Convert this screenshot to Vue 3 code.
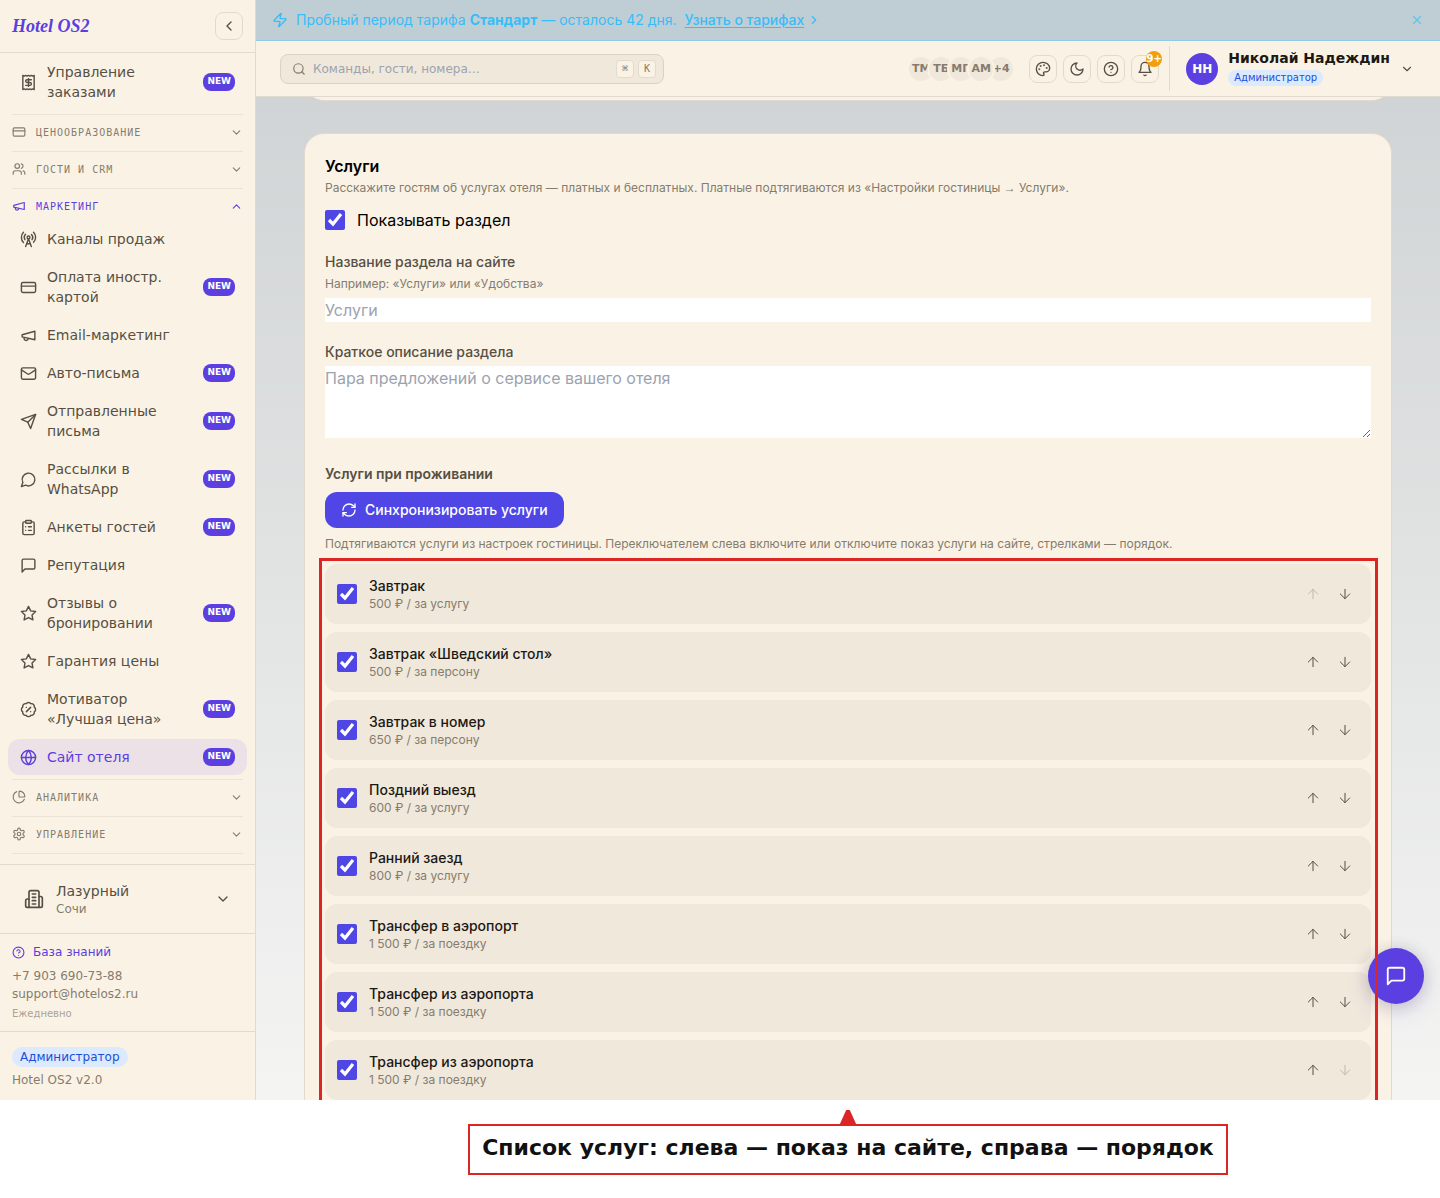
<script setup>
import { h, ref } from 'vue'

const paths = {
  receipt: '<path d="M4 2v20l2-1 2 1 2-1 2 1 2-1 2 1 2-1 2 1V2l-2 1-2-1-2 1-2-1-2 1-2-1-2 1Z"/><path d="M16 8h-6a2 2 0 1 0 0 4h4a2 2 0 1 1 0 4H8"/><path d="M12 17.5v-11"/>',
  card: '<rect width="20" height="14" x="2" y="5" rx="2"/><path d="M2 10h20"/>',
  users: '<path d="M16 21v-2a4 4 0 0 0-4-4H6a4 4 0 0 0-4 4v2"/><circle cx="9" cy="7" r="4"/><path d="M22 21v-2a4 4 0 0 0-3-3.87"/><path d="M16 3.13a4 4 0 0 1 0 7.75"/>',
  megaphone: '<path d="m3 11 18-5v12L3 14v-3z"/><path d="M11.6 16.8a3 3 0 1 1-5.8-1.6"/>',
  tower: '<path d="M4.9 16.1C1 12.2 1 5.8 4.9 1.9"/><path d="M7.8 4.7a6.14 6.14 0 0 0-.8 7.5"/><circle cx="12" cy="9" r="2"/><path d="M16.2 4.8c2 2 2.26 5.11.8 7.47"/><path d="M19.1 1.9a9.96 9.96 0 0 1 0 14.1"/><path d="M9.5 18h5"/><path d="m8 22 4-11 4 11"/>',
  mail: '<rect width="20" height="16" x="2" y="4" rx="2"/><path d="m22 7-8.97 5.7a1.94 1.94 0 0 1-2.06 0L2 7"/>',
  send: '<path d="m22 2-7 20-4-9-9-4Z"/><path d="M22 2 11 13"/>',
  chat: '<path d="M7.9 20A9 9 0 1 0 4 16.1L2 22Z"/>',
  clipboard: '<rect width="8" height="4" x="8" y="2" rx="1"/><path d="M16 4h2a2 2 0 0 1 2 2v14a2 2 0 0 1-2 2H6a2 2 0 0 1-2-2V6a2 2 0 0 1 2-2h2"/><path d="M12 11h4"/><path d="M12 16h4"/><path d="M8 11h.01"/><path d="M8 16h.01"/>',
  message: '<path d="M21 15a2 2 0 0 1-2 2H7l-4 4V5a2 2 0 0 1 2-2h14a2 2 0 0 1 2 2z"/>',
  star: '<path d="m12 2 3.09 6.26L22 9.27l-5 4.87 1.18 6.88L12 17.77l-6.18 3.25L7 14.14 2 9.27l6.91-1.01L12 2z"/>',
  percent: '<path d="M3.85 8.62a4 4 0 0 1 4.78-4.77 4 4 0 0 1 6.74 0 4 4 0 0 1 4.78 4.78 4 4 0 0 1 0 6.74 4 4 0 0 1-4.77 4.78 4 4 0 0 1-6.75 0 4 4 0 0 1-4.78-4.77 4 4 0 0 1 0-6.76Z"/><path d="m15 9-6 6"/><path d="M9 9h.01"/><path d="M15 15h.01"/>',
  globe: '<circle cx="12" cy="12" r="10"/><path d="M12 2a14.5 14.5 0 0 0 0 20 14.5 14.5 0 0 0 0-20"/><path d="M2 12h20"/>',
  pie: '<path d="M21 12c.552 0 1.005-.449.95-.998a10 10 0 0 0-8.953-8.951c-.55-.055-.998.398-.998.95v8a1 1 0 0 0 1 1z"/><path d="M21.21 15.89A10 10 0 1 1 8 2.83"/>',
  gear: '<path d="M12.22 2h-.44a2 2 0 0 0-2 2v.18a2 2 0 0 1-1 1.73l-.43.25a2 2 0 0 1-2 0l-.15-.08a2 2 0 0 0-2.73.73l-.22.38a2 2 0 0 0 .73 2.73l.15.1a2 2 0 0 1 1 1.72v.51a2 2 0 0 1-1 1.74l-.15.09a2 2 0 0 0-.73 2.73l.22.38a2 2 0 0 0 2.73.73l.15-.08a2 2 0 0 1 2 0l.43.25a2 2 0 0 1 1 1.73V20a2 2 0 0 0 2 2h.44a2 2 0 0 0 2-2v-.18a2 2 0 0 1 1-1.73l.43-.25a2 2 0 0 1 2 0l.15.08a2 2 0 0 0 2.73-.73l.22-.39a2 2 0 0 0-.73-2.73l-.15-.08a2 2 0 0 1-1-1.74v-.5a2 2 0 0 1 1-1.74l.15-.09a2 2 0 0 0 .73-2.73l-.22-.38a2 2 0 0 0-2.73-.73l-.15.08a2 2 0 0 1-2 0l-.43-.25a2 2 0 0 1-1-1.73V4a2 2 0 0 0-2-2z"/><circle cx="12" cy="12" r="3"/>',
  building: '<path d="M6 22V4a2 2 0 0 1 2-2h8a2 2 0 0 1 2 2v18Z"/><path d="M6 12H4a2 2 0 0 0-2 2v6a2 2 0 0 0 2 2h2"/><path d="M18 9h2a2 2 0 0 1 2 2v9a2 2 0 0 1-2 2h-2"/><path d="M10 6h4"/><path d="M10 10h4"/><path d="M10 14h4"/><path d="M10 18h4"/>',
  help: '<circle cx="12" cy="12" r="10"/><path d="M9.09 9a3 3 0 0 1 5.83 1c0 2-3 3-3 3"/><path d="M12 17h.01"/>',
  palette: '<circle cx="13.5" cy="6.5" r=".5" fill="currentColor"/><circle cx="17.5" cy="10.5" r=".5" fill="currentColor"/><circle cx="8.5" cy="7.5" r=".5" fill="currentColor"/><circle cx="6.5" cy="12.5" r=".5" fill="currentColor"/><path d="M12 2C6.5 2 2 6.5 2 12s4.5 10 10 10c.926 0 1.648-.746 1.648-1.688 0-.437-.18-.835-.437-1.125-.29-.289-.438-.652-.438-1.125a1.64 1.64 0 0 1 1.668-1.668h1.996c3.051 0 5.555-2.503 5.555-5.554C21.965 6.012 17.461 2 12 2z"/>',
  moon: '<path d="M12 3a6 6 0 0 0 9 9 9 9 0 1 1-9-9Z"/>',
  bell: '<path d="M6 8a6 6 0 0 1 12 0c0 7 3 9 3 9H3s3-2 3-9"/><path d="M10.3 21a1.94 1.94 0 0 0 3.4 0"/>',
  search: '<circle cx="11" cy="11" r="8"/><path d="m21 21-4.3-4.3"/>',
  zap: '<path d="M4 14a1 1 0 0 1-.78-1.63l9.9-10.2a.5.5 0 0 1 .86.46l-1.92 6.02A1 1 0 0 0 13 10h7a1 1 0 0 1 .78 1.63l-9.9 10.2a.5.5 0 0 1-.86-.46l1.92-6.02A1 1 0 0 0 11 14z"/>',
  close: '<path d="M18 6 6 18"/><path d="m6 6 12 12"/>',
  down: '<path d="m6 9 6 6 6-6"/>',
  up: '<path d="m18 15-6-6-6 6"/>',
  left: '<path d="m15 18-6-6 6-6"/>',
  right: '<path d="m9 18 6-6-6-6"/>',
  refresh: '<path d="M3 12a9 9 0 0 1 9-9 9.75 9.75 0 0 1 6.74 2.74L21 8"/><path d="M21 3v5h-5"/><path d="M21 12a9 9 0 0 1-9 9 9.75 9.75 0 0 1-6.74-2.74L3 16"/><path d="M8 16H3v5"/>',
  arrowUp: '<path d="m5 12 7-7 7 7"/><path d="M12 19V5"/>',
  arrowDown: '<path d="M12 5v14"/><path d="m19 12-7 7-7-7"/>'
}

const Icon = (props) =>
  h('svg', {
    width: props.size,
    height: props.size,
    viewBox: '0 0 24 24',
    fill: 'none',
    stroke: 'currentColor',
    'stroke-width': props.stroke || 2,
    'stroke-linecap': 'round',
    'stroke-linejoin': 'round',
    'aria-hidden': 'true',
    innerHTML: paths[props.name]
  })
Icon.props = ['name', 'size', 'stroke']

const groups = [
  { items: [{ icon: 'receipt', label: 'Управление заказами', isNew: true }] },
  { title: 'Ценообразование', icon: 'card' },
  { title: 'Гости и CRM', icon: 'users' },
  {
    title: 'Маркетинг',
    icon: 'megaphone',
    open: true,
    items: [
      { icon: 'tower', label: 'Каналы продаж' },
      { icon: 'card', label: 'Оплата иностр. картой', isNew: true },
      { icon: 'megaphone', label: 'Email-маркетинг' },
      { icon: 'mail', label: 'Авто-письма', isNew: true },
      { icon: 'send', label: 'Отправленные письма', isNew: true },
      { icon: 'chat', label: 'Рассылки в WhatsApp', isNew: true },
      { icon: 'clipboard', label: 'Анкеты гостей', isNew: true },
      { icon: 'message', label: 'Репутация' },
      { icon: 'star', label: 'Отзывы о бронировании', isNew: true },
      { icon: 'star', label: 'Гарантия цены' },
      { icon: 'percent', label: 'Мотиватор «Лучшая цена»', isNew: true },
      { icon: 'globe', label: 'Сайт отеля', isNew: true, active: true }
    ]
  },
  { title: 'Аналитика', icon: 'pie' },
  { title: 'Управление', icon: 'gear' }
]

const team = ['ТМ', 'ТБ', 'МП', 'АМ']

const showSection = ref(true)
const sectionName = ref('')
const sectionText = ref('')

const services = ref([
  { name: 'Завтрак', price: '500 ₽ / за услугу', on: true },
  { name: 'Завтрак «Шведский стол»', price: '500 ₽ / за персону', on: true },
  { name: 'Завтрак в номер', price: '650 ₽ / за персону', on: true },
  { name: 'Поздний выезд', price: '600 ₽ / за услугу', on: true },
  { name: 'Ранний заезд', price: '800 ₽ / за услугу', on: true },
  { name: 'Трансфер в аэропорт', price: '1 500 ₽ / за поездку', on: true },
  { name: 'Трансфер из аэропорта', price: '1 500 ₽ / за поездку', on: true },
  { name: 'Трансфер из аэропорта', price: '1 500 ₽ / за поездку', on: true }
])

function move(index, step) {
  const list = services.value
  const [item] = list.splice(index, 1)
  list.splice(index + step, 0, item)
}
</script>

<template>
  <div class="page">
    <div class="app">
      <aside class="sidebar">
        <div class="brand">
          <a href="#" class="logo">Hotel OS2</a>
          <button class="collapse" type="button" aria-label="Свернуть меню"><Icon name="left" size="16" /></button>
        </div>

        <nav class="nav">
          <div v-for="(group, g) in groups" :key="g" class="group">
            <button v-if="group.title" type="button" class="group-head" :class="{ open: group.open }">
              <Icon :name="group.icon" size="14" />
              <span>{{ group.title }}</span>
              <Icon :name="group.open ? 'up' : 'down'" size="13" />
            </button>
            <div v-if="group.items" class="items">
              <a v-for="item in group.items" :key="item.label" href="#" class="item" :class="{ active: item.active }">
                <Icon :name="item.icon" size="17" />
                <span class="item-label">{{ item.label }}</span>
                <span v-if="item.isNew" class="new">NEW</span>
              </a>
            </div>
          </div>
        </nav>

        <div class="hotel">
          <button type="button" class="hotel-button">
            <Icon name="building" size="20" />
            <span class="hotel-text">
              <span class="hotel-name">Лазурный</span>
              <span class="hotel-city">Сочи</span>
            </span>
            <Icon name="down" size="16" />
          </button>
        </div>

        <div class="support">
          <a href="#" class="knowledge"><Icon name="help" size="13" />База знаний</a>
          <a href="tel:+79036907388">+7 903 690-73-88</a>
          <a href="mailto:support@hotelos2.ru">support@hotelos2.ru</a>
          <small>Ежедневно</small>
        </div>

        <div class="version">
          <span class="role">Администратор</span>
          <span>Hotel OS2 v2.0</span>
        </div>
      </aside>

      <div class="content">
        <div class="banner">
          <Icon name="zap" size="16" />
          <span>Пробный период тарифа <strong>Стандарт</strong> — осталось 42 дня.</span>
          <a href="#">Узнать о тарифах</a>
          <Icon name="right" size="14" />
          <button type="button" aria-label="Закрыть"><Icon name="close" size="14" /></button>
        </div>

        <header class="topbar">
          <div class="search">
            <Icon name="search" size="14" />
            <input type="search" placeholder="Команды, гости, номера…" aria-label="Поиск" />
            <kbd>⌘</kbd>
            <kbd>K</kbd>
          </div>

          <div class="team">
            <span v-for="person in team" :key="person" class="mate">{{ person }}</span>
            <span class="mate more">+4</span>
          </div>

          <div class="tools">
            <button type="button" aria-label="Тема"><Icon name="palette" size="16" /></button>
            <button type="button" aria-label="Тёмный режим"><Icon name="moon" size="16" /></button>
            <button type="button" aria-label="Справка"><Icon name="help" size="16" /></button>
            <button type="button" aria-label="Уведомления" class="bell">
              <Icon name="bell" size="16" />
              <span class="count">9+</span>
            </button>
          </div>

          <button type="button" class="user">
            <span class="avatar">НН</span>
            <span class="user-text">
              <span class="user-name">Николай Надеждин</span>
              <span class="role small">Администратор</span>
            </span>
            <Icon name="down" size="14" />
          </button>
        </header>

        <main class="main">
          <section class="card previous"></section>

          <section class="card">
            <h2>Услуги</h2>
            <p class="hint intro">Расскажите гостям об услугах отеля — платных и бесплатных. Платные подтягиваются из «Настройки гостиницы <span class="arrow">→</span> Услуги».</p>

            <label class="toggle">
              <input v-model="showSection" type="checkbox" />
              Показывать раздел
            </label>

            <div class="field">
              <label for="section-name">Название раздела на сайте</label>
              <p class="hint">Например: «Услуги» или «Удобства»</p>
              <input id="section-name" v-model="sectionName" type="text" placeholder="Услуги" />
            </div>

            <div class="field">
              <label for="section-text">Краткое описание раздела</label>
              <textarea id="section-text" v-model="sectionText" rows="3" placeholder="Пара предложений о сервисе вашего отеля"></textarea>
            </div>

            <div class="stay">
              <h3>Услуги при проживании</h3>
              <button type="button" class="sync"><Icon name="refresh" size="16" />Синхронизировать услуги</button>
              <p class="hint">Подтягиваются услуги из настроек гостиницы. Переключателем слева включите или отключите показ услуги на сайте, стрелками — порядок.</p>
            </div>

            <ul class="services">
              <li v-for="(service, i) in services" :key="i">
                <input :id="'service-' + i" v-model="service.on" type="checkbox" />
                <label :for="'service-' + i">
                  <span class="service-name">{{ service.name }}</span>
                  <span class="service-price">{{ service.price }}</span>
                </label>
                <button type="button" aria-label="Выше" :disabled="i === 0" @click="move(i, -1)"><Icon name="arrowUp" size="16" stroke="1.5" /></button>
                <button type="button" aria-label="Ниже" :disabled="i === services.length - 1" @click="move(i, 1)"><Icon name="arrowDown" size="16" stroke="1.5" /></button>
              </li>
            </ul>
          </section>
        </main>
      </div>

      <button type="button" class="fab" aria-label="Чат"><Icon name="message" size="22" /></button>
    </div>

    <footer class="caption">
      <p>Список услуг: слева — показ на сайте, справа — порядок</p>
    </footer>
  </div>
</template>

<style>
body {
  margin: 0;
  background: #fff;
}
</style>

<style scoped>
.page,
.page * {
  box-sizing: border-box;
}

.page {
  --cream: #faf3e5;
  --sand: #f0e8db;
  --line: #e2dace;
  --text: #574f43;
  --muted: #857c6e;
  --violet: #5b3fe0;
  display: flex;
  flex-direction: column;
  height: 100vh;
  font-family: "DejaVu Sans", sans-serif;
  color: var(--text);
}

button {
  padding: 0;
  border: 0;
  background: none;
  font: inherit;
  color: inherit;
  cursor: pointer;
}

a {
  color: inherit;
  text-decoration: none;
}

p,
h2,
h3,
ul {
  margin: 0;
  padding: 0;
}

svg {
  display: block;
  flex: none;
}

.app {
  position: relative;
  display: flex;
  flex: 1;
  min-height: 0;
  overflow: hidden;
  background: linear-gradient(180deg, #cdd1d3 0%, #dfe1e1 46%, #f4f4f3 100%);
}

/* Sidebar */
.sidebar {
  display: flex;
  flex: none;
  flex-direction: column;
  width: 256px;
  border-right: 1px solid var(--line);
  background: var(--cream);
}

.brand {
  display: flex;
  align-items: center;
  justify-content: space-between;
  padding: 12px;
  border-bottom: 1px solid var(--line);
}

.logo {
  font: italic bold 18px "Liberation Serif", serif;
  color: var(--violet);
}

.collapse {
  display: grid;
  place-items: center;
  width: 28px;
  height: 28px;
  border: 1px solid var(--line);
  border-radius: 8px;
}

.nav {
  flex: 1;
  min-height: 0;
  padding: 0 12px;
  overflow-y: auto;
  scrollbar-width: none;
}

.group {
  padding: 4px 0;
  border-bottom: 1px solid #ebe3d6;
}

.group:first-child {
  padding-top: 1px;
}

.group-head {
  display: flex;
  align-items: center;
  gap: 10px;
  width: 100%;
  height: 28px;
  padding-bottom: 2px;
  font: 10px "DejaVu Sans Mono", monospace;
  letter-spacing: 1px;
  text-align: left;
  text-transform: uppercase;
  color: var(--muted);
}

.group-head span {
  flex: 1;
}

.group-head.open {
  color: var(--violet);
}

.items {
  display: flex;
  flex-direction: column;
  gap: 2px;
  margin: 0 -4px;
}

.item {
  display: flex;
  align-items: center;
  gap: 10px;
  padding: 8px 12px;
  border-radius: 12px;
  font-size: 14px;
  line-height: 20px;
}

.item-label {
  flex: 1;
}

.item.active {
  background: #ebe1e6;
  color: var(--violet);
}

.new {
  padding: 0 4px 2px;
  border-radius: 8px;
  background: var(--violet);
  font-size: 9px;
  font-weight: bold;
  line-height: 16px;
  color: #fff;
}

.hotel {
  padding: 8px;
  border-top: 1px solid var(--line);
}

.hotel-button {
  display: flex;
  align-items: center;
  gap: 12px;
  width: 100%;
  padding: 8px 16px;
  text-align: left;
}

.hotel-text {
  display: flex;
  flex: 1;
  flex-direction: column;
}

.hotel-name {
  font-size: 14px;
  line-height: 20px;
}

.hotel-city {
  font-size: 12px;
  line-height: 16px;
  color: var(--muted);
}

.support {
  display: flex;
  flex-direction: column;
  padding: 8px 12px;
  border-top: 1px solid var(--line);
  font-size: 12px;
  line-height: 18px;
  color: var(--muted);
}

.knowledge {
  display: flex;
  align-items: center;
  gap: 8px;
  height: 20px;
  margin-bottom: 5px;
  color: var(--violet);
}

.support small {
  margin-top: 2px;
  font-size: 10px;
  color: #aba294;
}

.version {
  display: flex;
  flex-direction: column;
  align-items: flex-start;
  gap: 4px;
  padding: 15px 12px 11px;
  border-top: 1px solid var(--line);
  font-size: 12px;
  line-height: 18px;
  color: var(--muted);
}

.role {
  padding: 0 8px;
  border-radius: 10px;
  background: #dbeafe;
  font-size: 12px;
  line-height: 20px;
  color: #1d4ed8;
}

.role.small {
  padding: 0 6px;
  font-size: 10px;
  line-height: 16px;
}

/* Content column */
.content {
  display: flex;
  flex: 1;
  flex-direction: column;
  min-width: 0;
}

.banner {
  display: flex;
  align-items: center;
  height: 41px;
  padding: 0 16px;
  border-bottom: 1px solid #8fcbe4;
  background: #bfced5;
  font-family: Inter, sans-serif;
  font-size: 14px;
  line-height: 20px;
  color: #38bdf8;
}

.banner span {
  margin-left: 8px;
}

.banner a {
  margin: 0 3px 0 8px;
  font-weight: 500;
  text-decoration: underline;
  text-underline-offset: 2px;
}

.banner button {
  margin-left: auto;
  opacity: 0.7;
}

.topbar {
  display: flex;
  align-items: center;
  height: 56px;
  padding: 0 24px;
  border-bottom: 1px solid var(--line);
  background: var(--cream);
}

.search {
  display: flex;
  align-items: center;
  gap: 4px;
  width: 384px;
  height: 30px;
  padding: 0 7px 0 11px;
  border: 1px solid #dbd2c5;
  border-radius: 8px;
  background: var(--sand);
  color: var(--muted);
}

.search input {
  flex: 1;
  min-width: 0;
  padding: 0 3px;
  border: 0;
  outline: 0;
  background: none;
  font: 12px "DejaVu Sans", sans-serif;
}

.search kbd {
  width: 18px;
  height: 18px;
  border: 1px solid var(--line);
  border-radius: 4px;
  background: var(--cream);
  font: 10px/16px "DejaVu Sans Mono", monospace;
  text-align: center;
}

input::placeholder,
textarea::placeholder {
  color: #9ca3af;
  opacity: 1;
}

.team {
  display: flex;
  margin-left: auto;
}

.mate {
  z-index: 1;
  width: 28px;
  height: 28px;
  border: 2px solid var(--cream);
  border-radius: 50%;
  background: var(--sand);
  font-size: 11px;
  font-weight: bold;
  line-height: 24px;
  text-align: center;
  color: var(--muted);
}

.mate + .mate {
  margin-left: -8px;
}

.mate.more {
  z-index: 0;
}

.tools {
  display: flex;
  gap: 6px;
  margin: 0 10px 0 14px;
}

.tools button {
  display: grid;
  place-items: center;
  width: 28px;
  height: 28px;
  border: 1px solid var(--line);
  border-radius: 8px;
}

.bell {
  position: relative;
}

.count {
  position: absolute;
  top: -5px;
  right: -4px;
  width: 16px;
  height: 16px;
  border-radius: 50%;
  background: #f59e0b;
  font-size: 10px;
  font-weight: bold;
  line-height: 16px;
  text-align: center;
  color: #fff;
}

.user {
  display: flex;
  align-items: center;
  gap: 10px;
  height: 45px;
  padding: 0 2px 0 16px;
  border-left: 1px solid var(--line);
  text-align: left;
}

.avatar {
  width: 32px;
  height: 32px;
  border-radius: 50%;
  background: var(--violet);
  font-size: 12px;
  font-weight: bold;
  line-height: 32px;
  text-align: center;
  color: #fff;
}

.user-text {
  display: flex;
  flex-direction: column;
  align-items: flex-start;
  gap: 2px;
  padding-bottom: 3px;
}

.user-name {
  font-size: 14px;
  font-weight: bold;
  line-height: 20px;
  color: #1c1814;
}

.main {
  flex: 1;
  min-height: 0;
  padding: 0 48px 32px;
  overflow-y: auto;
  scrollbar-width: none;
  font-family: Inter, sans-serif;
}

.card {
  padding: 20px;
  border: 1px solid var(--line);
  border-radius: 20px;
  background: var(--cream);
}

.card.previous {
  height: 44px;
  margin: -40px 0 32px;
}

h2 {
  font-size: 16px;
  font-weight: 600;
  line-height: 24px;
  color: #000;
}

.hint {
  font-size: 12px;
  line-height: 16px;
  color: var(--muted);
}

.intro {
  margin-top: 2px;
}

.arrow {
  font-family: "Liberation Sans", sans-serif;
}

input[type="checkbox"] {
  flex: none;
  width: 20px;
  height: 20px;
  margin: 0;
  accent-color: #4f46e5;
}

.toggle {
  display: flex;
  align-items: center;
  gap: 12px;
  margin-top: 12px;
  font-size: 16px;
  line-height: 24px;
  color: #000;
}

.field {
  margin-top: 20px;
}

.field label {
  display: block;
  font-size: 14px;
  font-weight: 500;
  line-height: 20px;
}

.field .hint {
  margin-top: 4px;
}

.field input,
.field textarea {
  display: block;
  width: 100%;
  margin-top: 4px;
  padding: 0;
  border: 0;
  background: #fff;
  font: 16px/24px Inter, sans-serif;
  color: #000;
}

.field input {
  height: 24px;
  margin-top: 6px;
}

.stay {
  display: flex;
  flex-direction: column;
  align-items: flex-start;
  gap: 8px;
  margin: 26px 0 12px;
}

h3 {
  font-size: 14px;
  font-weight: 600;
  line-height: 20px;
}

.sync {
  display: flex;
  align-items: center;
  gap: 8px;
  height: 36px;
  padding: 0 16px;
  border-radius: 12px;
  background: #4f46e5;
  font-size: 14px;
  font-weight: 500;
  line-height: 20px;
  color: #fff;
}

.services {
  position: relative;
  display: flex;
  flex-direction: column;
  gap: 8px;
  list-style: none;
}

.services::after {
  content: "";
  position: absolute;
  inset: -6px -7px -6px -6px;
  z-index: 3;
  border: 3px solid #dc2626;
  pointer-events: none;
}

.services li {
  display: flex;
  align-items: center;
  padding: 12px;
  border-radius: 12px;
  background: var(--sand);
}

.services label {
  display: flex;
  flex: 1;
  flex-direction: column;
  margin-left: 12px;
}

.service-name {
  font-size: 14px;
  font-weight: 500;
  line-height: 20px;
  color: #1c1814;
}

.service-price {
  font-size: 12px;
  line-height: 16px;
  color: var(--muted);
}

.services button {
  display: grid;
  place-items: center;
  width: 28px;
  height: 28px;
  margin-left: 4px;
}

.services button:disabled {
  opacity: 0.3;
}

.fab {
  position: absolute;
  right: 16px;
  bottom: 96px;
  z-index: 2;
  display: grid;
  place-items: center;
  width: 56px;
  height: 56px;
  border-radius: 50%;
  background: var(--violet);
  box-shadow: 0 8px 24px rgba(91, 63, 224, 0.12), 0 2px 16px rgba(40, 30, 20, 0.2);
  color: #fff;
}

/* Caption */
.caption {
  display: flex;
  justify-content: center;
  padding: 24px 0 23px 256px;
}

.caption p {
  position: relative;
  padding: 7px 12px 10px;
  border: 2px solid #dc2626;
  font-size: 22px;
  font-weight: bold;
  line-height: 30px;
  color: #111;
}

.caption p::before {
  content: "";
  position: absolute;
  bottom: 100%;
  left: 50%;
  width: 18px;
  height: 16px;
  background: #dc2626;
  clip-path: polygon(40% 0, 60% 0, 100% 100%, 0 100%);
  transform: translateX(-50%);
}
</style>
